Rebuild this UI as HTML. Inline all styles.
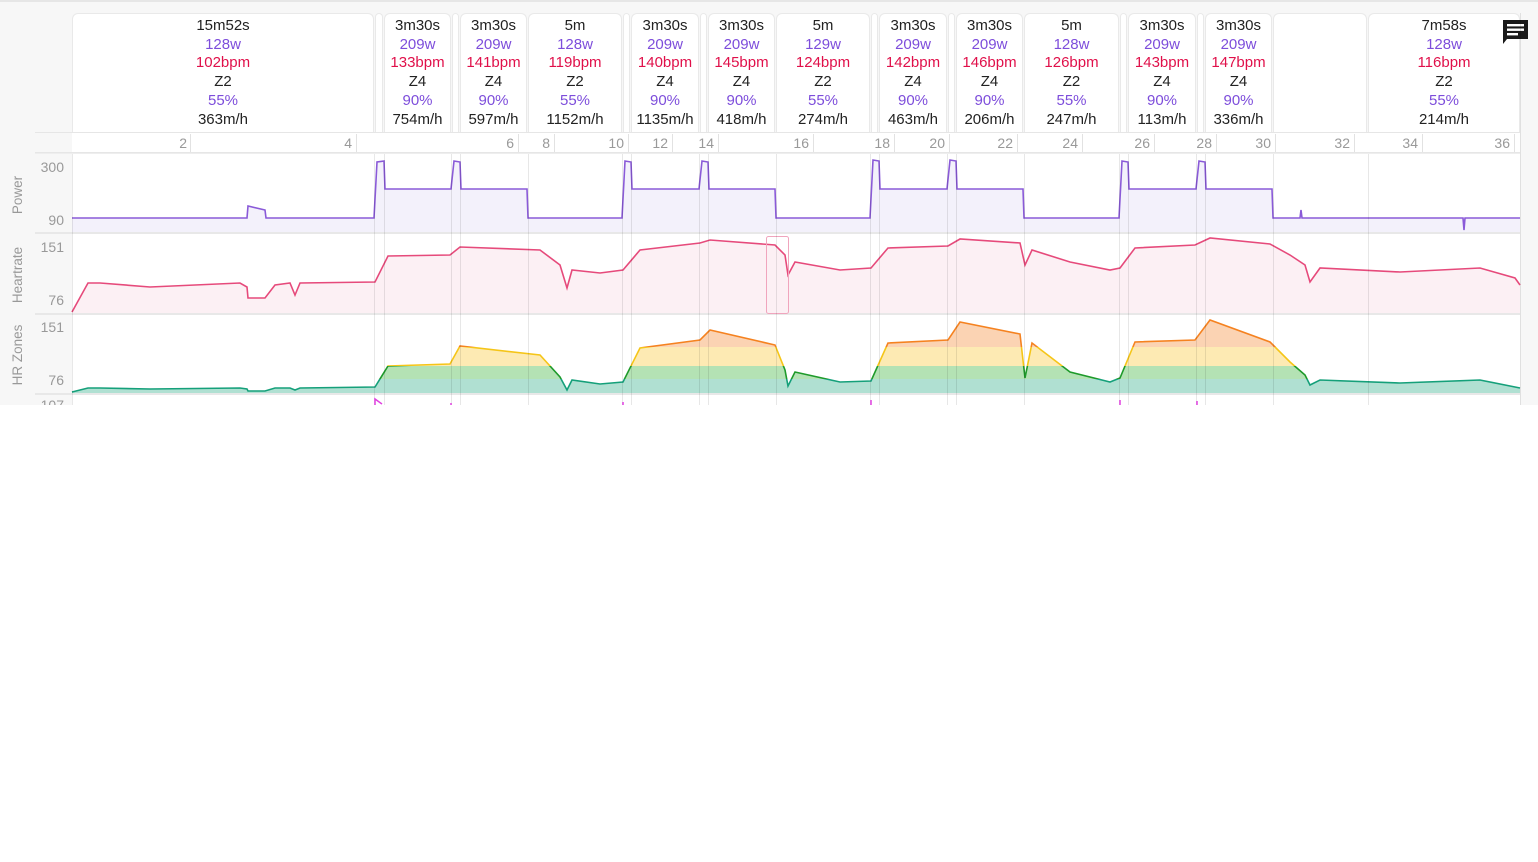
<!DOCTYPE html>
<html><head><meta charset="utf-8"><style>
body{margin:0;width:1538px;height:862px;background:#fff;font-family:"Liberation Sans",sans-serif;overflow:hidden;position:relative}
#top{position:absolute;left:0;top:0;width:1538px;height:405px;background:#f7f7f7;overflow:hidden}
#bl{position:absolute;left:0;top:0;width:1538px;height:2px;background:#e6e6e6}
.card{position:absolute;top:13px;height:119px;background:#fff;border:1px solid #e9e9e9;border-bottom:none;border-radius:6px 6px 0 0;box-sizing:border-box;text-align:center;font-size:15px;line-height:18.7px;padding-top:3px;color:#222;overflow:hidden;white-space:nowrap}
.p{color:#7d4ddb}.r{color:#e0104a}
</style></head><body>
<div id="top">
<div id="bl"></div>
<div class="card" style="left:72px;width:302px">15m52s<br><span class="p">128w</span><br><span class="r">102bpm</span><br>Z2<br><span class="p">55%</span><br>363m/h</div>
<div class="card" style="left:375px;width:8px"></div>
<div class="card" style="left:384px;width:67px">3m30s<br><span class="p">209w</span><br><span class="r">133bpm</span><br>Z4<br><span class="p">90%</span><br>754m/h</div>
<div class="card" style="left:452px;width:7px"></div>
<div class="card" style="left:460px;width:67px">3m30s<br><span class="p">209w</span><br><span class="r">141bpm</span><br>Z4<br><span class="p">90%</span><br>597m/h</div>
<div class="card" style="left:528px;width:94px">5m<br><span class="p">128w</span><br><span class="r">119bpm</span><br>Z2<br><span class="p">55%</span><br>1152m/h</div>
<div class="card" style="left:623px;width:7px"></div>
<div class="card" style="left:631px;width:68px">3m30s<br><span class="p">209w</span><br><span class="r">140bpm</span><br>Z4<br><span class="p">90%</span><br>1135m/h</div>
<div class="card" style="left:700px;width:7px"></div>
<div class="card" style="left:708px;width:67px">3m30s<br><span class="p">209w</span><br><span class="r">145bpm</span><br>Z4<br><span class="p">90%</span><br>418m/h</div>
<div class="card" style="left:776px;width:94px">5m<br><span class="p">129w</span><br><span class="r">124bpm</span><br>Z2<br><span class="p">55%</span><br>274m/h</div>
<div class="card" style="left:871px;width:7px"></div>
<div class="card" style="left:879px;width:68px">3m30s<br><span class="p">209w</span><br><span class="r">142bpm</span><br>Z4<br><span class="p">90%</span><br>463m/h</div>
<div class="card" style="left:948px;width:7px"></div>
<div class="card" style="left:956px;width:67px">3m30s<br><span class="p">209w</span><br><span class="r">146bpm</span><br>Z4<br><span class="p">90%</span><br>206m/h</div>
<div class="card" style="left:1024px;width:95px">5m<br><span class="p">128w</span><br><span class="r">126bpm</span><br>Z2<br><span class="p">55%</span><br>247m/h</div>
<div class="card" style="left:1120px;width:7px"></div>
<div class="card" style="left:1128px;width:68px">3m30s<br><span class="p">209w</span><br><span class="r">143bpm</span><br>Z4<br><span class="p">90%</span><br>113m/h</div>
<div class="card" style="left:1197px;width:7px"></div>
<div class="card" style="left:1205px;width:67px">3m30s<br><span class="p">209w</span><br><span class="r">147bpm</span><br>Z4<br><span class="p">90%</span><br>336m/h</div>
<div class="card" style="left:1273px;width:94px"></div>
<div class="card" style="left:1368px;width:152px">7m58s<br><span class="p">128w</span><br><span class="r">116bpm</span><br>Z2<br><span class="p">55%</span><br>214m/h</div>

<svg style="position:absolute;left:1501px;top:18px" width="28" height="28" viewBox="0 0 28 28"><path d="M2 2h25v19H6l-4 5z" fill="#1a1a1a"/><rect x="6" y="6" width="17" height="2.4" fill="#fff"/><rect x="6" y="10.5" width="17" height="2.4" fill="#fff"/><rect x="6" y="15" width="11" height="2.4" fill="#fff"/></svg>

<svg style="position:absolute;left:0;top:0" width="1538" height="405">
<defs>
<linearGradient id="zg" gradientUnits="userSpaceOnUse" x1="0" y1="314" x2="0" y2="393">
<stop offset="0" stop-color="#f58220"/><stop offset="0.418" stop-color="#f58220"/><stop offset="0.418" stop-color="#f5c518"/><stop offset="0.658" stop-color="#f5c518"/><stop offset="0.658" stop-color="#1e9a2a"/><stop offset="0.823" stop-color="#1e9a2a"/><stop offset="0.823" stop-color="#15a07a"/><stop offset="1" stop-color="#15a07a"/></linearGradient>
<clipPath id="zc"><path d="M72,393 L72,392 88,388 100,388 150,389 240,388 247,389 248,391 265,391 275,388 290,388 295,390 300,388 375,387 388,366 450,364 460,346 540,355 560,377 567,390 572,380 600,384 623,382 640,348 700,340 710,330 775,345 785,370 788,386 795,372 840,382 871,381 888,343 948,340 960,322 1020,334 1025,378 1032,343 1070,372 1110,382 1120,378 1135,342 1195,340 1210,320 1270,342 1290,362 1305,375 1310,385 1320,380 1400,383 1480,380 1515,387 1520,388 L1520,393Z"/></clipPath>
</defs>
<rect x="35" y="132" width="1485" height="1" fill="#e6e6e6"/>
<rect x="72" y="133" width="1448" height="19" fill="#fff"/>
<rect x="35" y="152" width="1485" height="1.5" fill="#e6e6e6"/>
<g font-size="14" fill="#999" text-anchor="end">
<text x="187" y="148">2</text><text x="352" y="148">4</text><text x="514" y="148">6</text><text x="550" y="148">8</text><text x="624" y="148">10</text><text x="668" y="148">12</text><text x="714" y="148">14</text><text x="809" y="148">16</text><text x="890" y="148">18</text><text x="945" y="148">20</text><text x="1013" y="148">22</text><text x="1078" y="148">24</text><text x="1150" y="148">26</text><text x="1212" y="148">28</text><text x="1271" y="148">30</text><text x="1350" y="148">32</text><text x="1418" y="148">34</text><text x="1510" y="148">36</text>
</g>
<g fill="#e2e2e2"><rect x="190" y="134" width="1" height="18"/><rect x="356" y="134" width="1" height="18"/><rect x="518" y="134" width="1" height="18"/><rect x="554" y="134" width="1" height="18"/><rect x="628" y="134" width="1" height="18"/><rect x="672" y="134" width="1" height="18"/><rect x="718" y="134" width="1" height="18"/><rect x="813" y="134" width="1" height="18"/><rect x="894" y="134" width="1" height="18"/><rect x="949" y="134" width="1" height="18"/><rect x="1017" y="134" width="1" height="18"/><rect x="1082" y="134" width="1" height="18"/><rect x="1154" y="134" width="1" height="18"/><rect x="1216" y="134" width="1" height="18"/><rect x="1275" y="134" width="1" height="18"/><rect x="1354" y="134" width="1" height="18"/><rect x="1422" y="134" width="1" height="18"/><rect x="1514" y="134" width="1" height="18"/></g>
<rect x="72" y="154" width="1448" height="78" fill="#fff"/>
<rect x="72" y="234" width="1448" height="79" fill="#fff"/>
<rect x="72" y="315" width="1448" height="78" fill="#fff"/>
<rect x="72" y="395" width="1448" height="10" fill="#fff"/>
<rect x="35" y="232" width="1485" height="2" fill="#e8e8e8"/>
<rect x="35" y="313" width="1485" height="2" fill="#e8e8e8"/>
<rect x="35" y="393" width="1485" height="2" fill="#e8e8e8"/>
<path d="M72,232 L72,218 247,218 248,206 265,210 266,218 374,218 377,162 384,161 385,189 451,189 454,161 460,162 461,189 527,189 528,218 622,218 625,161 631,162 632,189 699,189 702,161 708,162 709,189 775,189 776,218 870,218 873,160 879,161 880,189 947,189 950,160 956,161 957,189 1023,189 1024,218 1119,218 1122,161 1128,162 1129,189 1196,189 1199,161 1205,162 1206,189 1272,189 1273,218 1520,218 L1520,232Z" fill="#f3f1fb"/>
<path d="M72,218 L247,218 248,206 265,210 266,218 374,218 377,162 384,161 385,189 451,189 454,161 460,162 461,189 527,189 528,218 622,218 625,161 631,162 632,189 699,189 702,161 708,162 709,189 775,189 776,218 870,218 873,160 879,161 880,189 947,189 950,160 956,161 957,189 1023,189 1024,218 1119,218 1122,161 1128,162 1129,189 1196,189 1199,161 1205,162 1206,189 1272,189 1273,218 1300,218 1301,210 1302,218 1463,218 1464,230 1465,218 1520,218" fill="none" stroke="#8a5ad8" stroke-width="1.6"/>
<path d="M72,313 L72,312 88,283 100,283 150,287 240,283 247,287 248,298 265,298 275,285 290,283 295,295 300,283 375,282 388,256 450,255 460,247 540,250 560,265 567,288 572,270 600,273 623,270 640,250 700,243 710,240 775,245 785,255 788,275 795,262 840,270 871,268 888,248 948,246 960,239 1020,243 1025,265 1032,250 1070,262 1110,270 1120,268 1135,248 1195,245 1210,238 1270,244 1290,255 1305,265 1310,282 1320,268 1400,272 1480,268 1515,278 1520,285 L1520,313Z" fill="#fcf0f4"/>
<path d="M72,312 88,283 100,283 150,287 240,283 247,287 248,298 265,298 275,285 290,283 295,295 300,283 375,282 388,256 450,255 460,247 540,250 560,265 567,288 572,270 600,273 623,270 640,250 700,243 710,240 775,245 785,255 788,275 795,262 840,270 871,268 888,248 948,246 960,239 1020,243 1025,265 1032,250 1070,262 1110,270 1120,268 1135,248 1195,245 1210,238 1270,244 1290,255 1305,265 1310,282 1320,268 1400,272 1480,268 1515,278 1520,285" fill="none" stroke="#e64a7b" stroke-width="1.6"/>
<rect x="766.5" y="236.5" width="22" height="77" rx="2" fill="none" stroke="#f0a5bd"/>
<g clip-path="url(#zc)">
<rect x="72" y="300" width="1448" height="47" fill="#fbd3b3"/>
<rect x="72" y="347" width="1448" height="19" fill="#fdeab3"/>
<rect x="72" y="366" width="1448" height="13" fill="#b4e2b4"/>
<rect x="72" y="379" width="1448" height="14" fill="#b0e0d2"/>
</g>
<path d="M72,392 88,388 100,388 150,389 240,388 247,389 248,391 265,391 275,388 290,388 295,390 300,388 375,387 388,366 450,364 460,346 540,355 560,377 567,390 572,380 600,384 623,382 640,348 700,340 710,330 775,345 785,370 788,386 795,372 840,382 871,381 888,343 948,340 960,322 1020,334 1025,378 1032,343 1070,372 1110,382 1120,378 1135,342 1195,340 1210,320 1270,342 1290,362 1305,375 1310,385 1320,380 1400,383 1480,380 1515,387 1520,388" fill="none" stroke="url(#zg)" stroke-width="1.6"/>
<g fill="#000" opacity="0.09">
<rect x="374" y="154" width="1" height="251"/><rect x="384" y="154" width="1" height="251"/><rect x="451" y="154" width="1" height="251"/><rect x="460" y="154" width="1" height="251"/><rect x="528" y="154" width="1" height="251"/><rect x="622" y="154" width="1" height="251"/><rect x="631" y="154" width="1" height="251"/><rect x="699" y="154" width="1" height="251"/><rect x="708" y="154" width="1" height="251"/><rect x="776" y="154" width="1" height="251"/><rect x="870" y="154" width="1" height="251"/><rect x="879" y="154" width="1" height="251"/><rect x="947" y="154" width="1" height="251"/><rect x="956" y="154" width="1" height="251"/><rect x="1024" y="154" width="1" height="251"/><rect x="1119" y="154" width="1" height="251"/><rect x="1128" y="154" width="1" height="251"/><rect x="1196" y="154" width="1" height="251"/><rect x="1205" y="154" width="1" height="251"/><rect x="1273" y="154" width="1" height="251"/><rect x="1368" y="154" width="1" height="251"/><rect x="1520" y="13" width="1" height="392"/><rect x="72" y="154" width="1" height="251"/>
</g>
<g stroke="#e040e0" stroke-width="1.5" fill="none"><path d="M375,405 375,399 382,404"/><path d="M871,405 871,400"/><path d="M1120,405 1120,400"/><path d="M1197,405 1197,401"/><path d="M623,405 623,402"/><path d="M451,405 451,403"/></g>
<g font-size="14" fill="#999" text-anchor="end">
<text x="64" y="172">300</text><text x="64" y="225">90</text><text x="64" y="252">151</text><text x="64" y="305">76</text><text x="64" y="332">151</text><text x="64" y="385">76</text><text x="64" y="410">107</text>
</g>
<g font-size="13.5" fill="#999" text-anchor="middle">
<text transform="translate(22,195) rotate(-90)">Power</text>
<text transform="translate(22,275) rotate(-90)">Heartrate</text>
<text transform="translate(22,355) rotate(-90)">HR Zones</text>
</g>
</svg>
</div>
</body></html>
